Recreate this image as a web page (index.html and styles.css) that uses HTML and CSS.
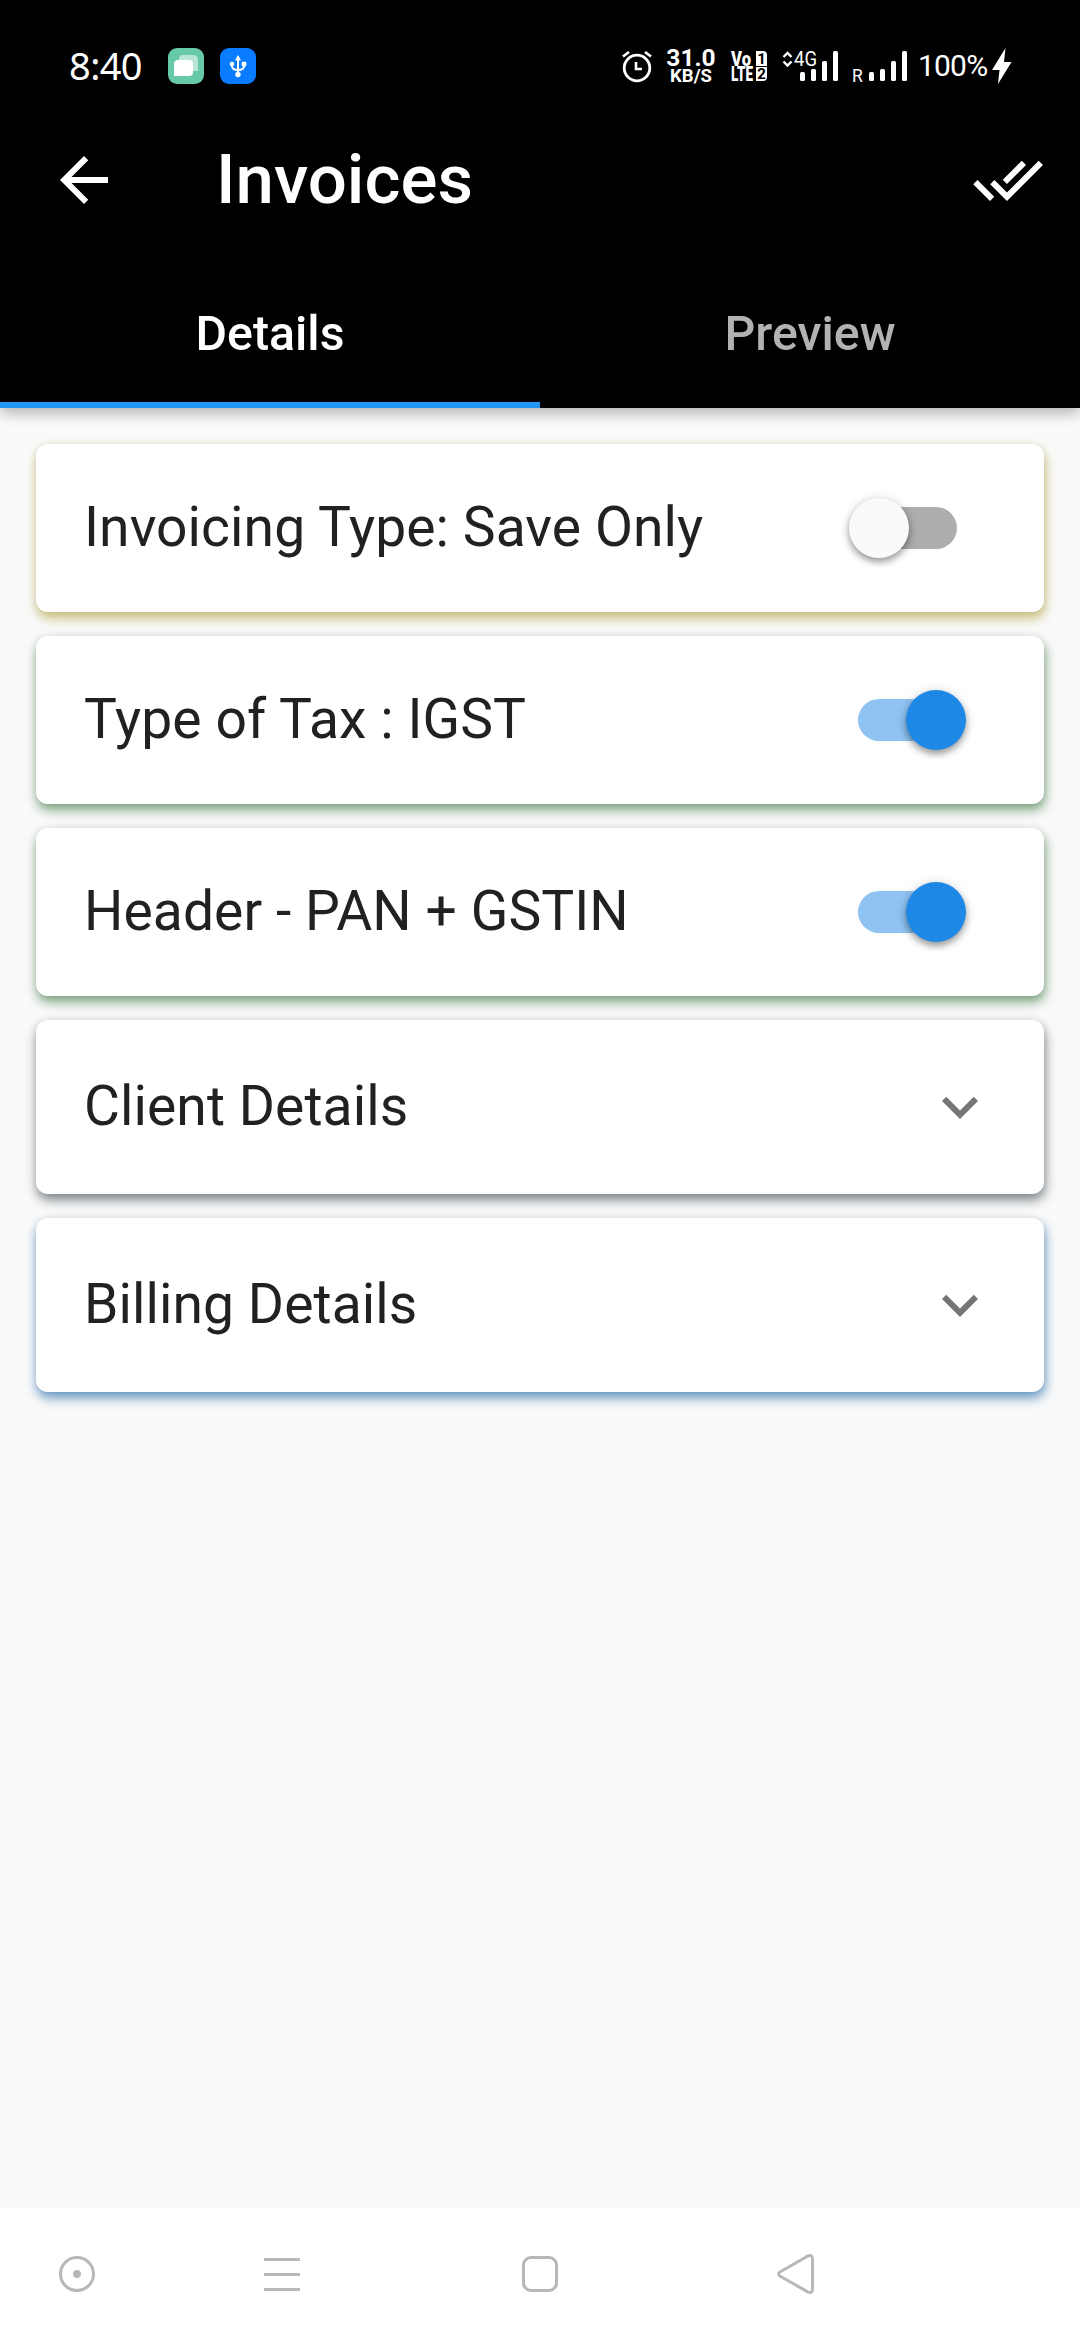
FILE: index.html
```html
<!DOCTYPE html>
<html lang="en">
<head>
<meta charset="utf-8">
<title>Invoices</title>
<link rel="stylesheet" href="styles.css">
</head>
<body>
<div class="screen">
  <header class="header">
    <div class="status">
      <span class="clock">8:40</span>
      <svg class="app-badge" width="36" height="36" viewBox="0 0 36 36">
        <rect width="36" height="36" rx="9" fill="#66c9a8"/>
        <path d="M15 7h10q5 0 5 5v11H11V11q0-4 4-4z" fill="#b9e6d6"/>
        <path d="M10 12h11q4 0 4 4v8q0 4-4 4H6V16q0-4 4-4z" fill="#fff"/>
      </svg>
      <svg class="usb-badge" width="36" height="36" viewBox="0 0 36 36">
        <rect width="36" height="36" rx="9" fill="#0a7cff"/>
        <g fill="none" stroke="#fff" stroke-width="2"><path d="M18 11v15M12 17v1q0 4 6 4M24 17v1q0 4-6 4"/></g>
        <path d="M18 7l3 5.500h-6z" fill="#fff"/><circle cx="12" cy="16" r="2.300" fill="#fff"/><rect x="21.700" y="13.700" width="4.600" height="4.600" rx="1" fill="#fff"/><circle cx="18" cy="26.500" r="2.700" fill="#fff"/>
      </svg>
      <svg class="alarm" width="32" height="36" viewBox="0 0 32 36" fill="none" stroke="#fff">
        <circle cx="16" cy="20" r="12.800" stroke-width="2.800"/>
        <path d="M15 14v7h6" stroke-width="2.600"/>
        <path d="M2 8.500l6-4.500M30 8.500l-6-4.500" stroke-width="2.800"/>
      </svg>
      <div class="speed"><span class="speed-value">31.0</span><span class="speed-unit">KB/S</span></div>
      <svg class="volte" width="36" height="36" viewBox="0 0 36 36" fill="#fff">
        <text class="volte-text" x="0" y="17.500" textLength="20" lengthAdjust="spacingAndGlyphs">Vo</text>
        <text class="volte-text" x="0" y="33" textLength="22" lengthAdjust="spacingAndGlyphs">LTE</text>
        <path d="M25 3h7q4 0 4 4v11H25zM25 19h11v10q0 4-4 4h-7z"/>
        <text class="sim-text" x="30.500" y="15.500" text-anchor="middle">1</text>
        <text class="sim-text" x="30.500" y="31" text-anchor="middle">2</text>
      </svg>
      <svg class="signal-one" width="58" height="36" viewBox="0 0 58 36" fill="#fff">
        <path d="M1.500 9L5.500 5L9.500 9M1.500 13.500L5.500 17.500L9.500 13.500" fill="none" stroke="#fff" stroke-width="2.400"/>
        <text class="net-text" x="12" y="18" textLength="23" lengthAdjust="spacingAndGlyphs">4G</text>
        <rect x="18" y="24" width="5" height="9" rx="1.500"/><rect x="29" y="21" width="5" height="12" rx="1.500"/><rect x="40" y="13" width="5" height="20" rx="1.500"/><rect x="51" y="3" width="5" height="30" rx="1.500"/>
      </svg>
      <svg class="signal-two" width="56" height="36" viewBox="0 0 56 36" fill="#fff">
        <text class="roam-text" x="0" y="34">R</text>
        <rect x="17" y="24" width="5" height="9" rx="1.500"/><rect x="28" y="21" width="5" height="12" rx="1.500"/><rect x="39" y="13" width="5" height="20" rx="1.500"/><rect x="50" y="3" width="5" height="30" rx="1.500"/>
      </svg>
      <span class="battery">100%</span>
      <svg class="bolt" width="20" height="36" viewBox="0 0 20 36" fill="#fff"><path d="M13.500 0L0 22h7.500L6 36L19.500 14H12z"/></svg>
    </div>
    <div class="toolbar">
      <svg width="72" height="72" viewBox="0 0 24 24" fill="#fff"><path d="M20 11H7.830l5.590-5.590L12 4l-8 8 8 8 1.410-1.410L7.830 13H20v-2z"/></svg>
      <h1 class="title">Invoices</h1>
      <svg width="72" height="72" viewBox="0 0 24 24" fill="#fff"><path d="M18 7l-1.410-1.410-6.340 6.340 1.410 1.410L18 7zm4.240-1.410L11.660 16.170 7.480 12l-1.410 1.410L11.660 19l12-12-1.420-1.410zM.410 13.410L6 19l1.410-1.410L1.830 12 .410 13.410z"/></svg>
    </div>
    <nav class="tabs">
      <div class="tab tab-active"><span>Details</span></div>
      <div class="tab"><span>Preview</span></div>
    </nav>
  </header>
  <main class="content">
    <section class="card amber"><span class="label">Invoicing Type: Save Only</span><span class="switch"><span class="thumb"></span></span></section>
    <section class="card green"><span class="label">Type of Tax : IGST</span><span class="switch on"><span class="thumb"></span></span></section>
    <section class="card green"><span class="label">Header - PAN + GSTIN</span><span class="switch on"><span class="thumb"></span></span></section>
    <section class="card tall slate"><span class="label">Client Details</span><svg width="72" height="72" viewBox="0 0 24 24" fill="#757575"><path d="M16.590 8.590L12 13.170 7.410 8.590 6 10l6 6 6-6z"/></svg></section>
    <section class="card tall blue"><span class="label">Billing Details</span><svg width="72" height="72" viewBox="0 0 24 24" fill="#757575"><path d="M16.590 8.590L12 13.170 7.410 8.590 6 10l6 6 6-6z"/></svg></section>
  </main>
  <footer class="navbar">
    <svg width="42" height="42" viewBox="0 0 42 42"><circle cx="21" cy="21" r="16.500"/><circle class="dot" cx="21" cy="21" r="4"/></svg>
    <svg width="42" height="42" viewBox="0 0 42 42"><path d="M3 6.500h36M3 21.500h36M3 36.500h36"/></svg>
    <svg width="42" height="42" viewBox="0 0 42 42"><rect x="4.500" y="4.500" width="33" height="33" rx="7.500"/></svg>
    <svg width="42" height="42" viewBox="0 0 42 42"><path d="M4.900 19L32.600 3.200Q37.500 1 37.500 6V36Q37.500 41 32.600 38.800L4.900 23Q2.200 21 4.900 19z"/></svg>
  </footer>
</div>
</body>
</html>
```
FILE: styles.css
```css
* { box-sizing: border-box; }
body { margin: 0; background: #fafafa; font-family: Roboto, "Liberation Sans", sans-serif; }
svg { display: block; flex: none; overflow: visible; }
.screen { width: 1080px; height: 2340px; display: flex; flex-direction: column; background: #fafafa; overflow: hidden; }

.header { height: 408px; flex: none; background: #000; color: #fff; box-shadow: 0 6px 12px rgba(0, 0, 0, .2), 0 3px 18px rgba(0, 0, 0, .1); }
.status { height: 96px; padding: 36px 0 0 69px; display: flex; align-items: center; white-space: nowrap; }
.status > * { flex: none; }
.clock { width: 99px; padding-bottom: 2px; font: 400 38px/46px "Noto Sans", sans-serif; letter-spacing: -.6px; }
.usb-badge { margin-left: 16px; }
.alarm { margin-left: 365px; }
.speed { width: 50px; margin-left: 13px; display: flex; flex-direction: column; align-items: center; font-weight: 700; }
.speed-value { font-size: 24.500px; line-height: 20px; }
.speed-unit { font-size: 18.500px; line-height: 17px; }
.volte { margin-left: 15px; }
.volte-text { font: 900 19.500px Roboto, sans-serif; }
.sim-text { font: 700 15px Roboto, sans-serif; fill: #000; }
.signal-one { margin-left: 15px; }
.net-text { font: 400 21px Roboto, sans-serif; }
.signal-two { margin-left: 12px; }
.roam-text { font: 400 17.500px Roboto, sans-serif; }
.battery { width: 74px; margin-left: 10px; font-size: 30px; line-height: 36px; letter-spacing: -.8px; }
.bolt { margin-left: 0; }

.toolbar { height: 168px; padding: 0 36px 0 48px; display: flex; align-items: center; }
.title { flex: 1; margin: 0 0 0 96px; font-size: 69px; font-weight: 500; line-height: 80px; }
.tabs { height: 144px; display: flex; }
.tab { flex: 1; padding-bottom: 6px; display: flex; align-items: center; justify-content: center; font-size: 48.300px; font-weight: 500; color: #b2b2b2; }
.tab-active { color: #fff; box-shadow: inset 0 -6px #2196f3; }

.content { flex: 1; padding: 36px; display: flex; flex-direction: column; gap: 24px; }
.card { height: 168px; flex: none; padding: 0 48px; display: flex; align-items: center; justify-content: space-between; border-radius: 12px; background: #fff; }
.tall { height: 174px; }
.amber { box-shadow: 1px 6px 12px rgba(158, 142, 20, .56), 0 0 8px rgba(0, 0, 0, .06); }
.green { box-shadow: 1px 6px 12px rgba(27, 94, 32, .56), 0 0 8px rgba(0, 0, 0, .06); }
.slate { box-shadow: 1px 6px 12px rgba(38, 50, 56, .58), 0 0 8px rgba(0, 0, 0, .06); }
.blue { box-shadow: 1px 6px 12px rgba(13, 91, 161, .62), 0 0 8px rgba(0, 0, 0, .06); }
.label { padding-bottom: 3px; font-size: 55.200px; line-height: 66px; color: #212121; letter-spacing: .08px; }
.switch { width: 99px; height: 42px; margin-right: 39px; display: flex; align-items: center; border-radius: 21px; background: #adadad; }
.switch .thumb { flex: none; width: 60px; height: 60px; margin-left: -9px; border-radius: 50%; background: #fafafa; box-shadow: 0 4px 7px rgba(0, 0, 0, .35), 0 1px 12px rgba(0, 0, 0, .12); }
.switch.on { background: #8fc3f2; }
.switch.on .thumb { margin-left: 48px; background: #1e88e5; }

.navbar { height: 132px; flex: none; display: grid; grid-template-columns: 154px 256px 260px 252px; align-items: center; justify-items: center; background: #fff; }
.navbar svg { fill: none; stroke: #b8b8b8; stroke-width: 3; }
.navbar .dot { fill: #b8b8b8; stroke: none; }
```
